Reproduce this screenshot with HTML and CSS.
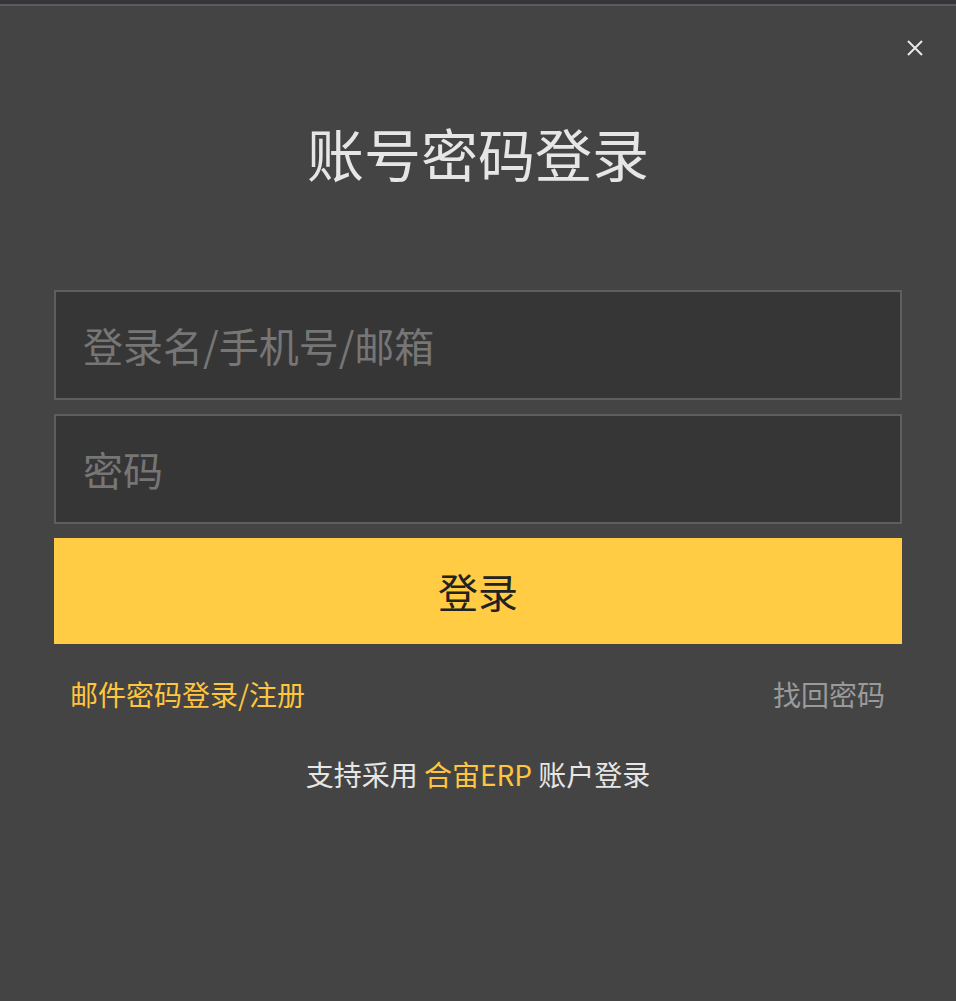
FILE: index.html
```html
<!DOCTYPE html>
<html lang="zh-CN">
<head>
<meta charset="utf-8">
<link rel="stylesheet" href="styles.css">
</head>
<body>
<div class="topbar"></div>
<div class="dialog">
  <div class="close-row">
    <button class="close" aria-label="关闭">
      <svg width="16" height="16" viewBox="0 0 16 16"><path d="M1 1 L15 15 M15 1 L1 15" stroke="#e8e8e8" stroke-width="2" fill="none"/></svg>
    </button>
  </div>
  <h1 class="title">账号密码登录</h1>
  <form class="form">
    <input class="field" type="text" placeholder="登录名/手机号/邮箱">
    <input class="field" type="password" placeholder="密码">
    <button class="submit" type="button">登录</button>
  </form>
  <div class="links">
    <a class="link-yellow" href="#">邮件密码登录/注册</a>
    <a class="link-gray" href="#">找回密码</a>
  </div>
  <p class="support">支持采用 <span class="hl">合宙ERP</span> 账户登录</p>
</div>
</body>
</html>
```
FILE: styles.css
```css
html, body {
  margin: 0;
  padding: 0;
  background: #444444;
  height: 100%;
}
body {
  font-family: "Noto Sans CJK SC", "Noto Sans", sans-serif;
  color: #e6e6e6;
}
.topbar {
  height: 4px;
  background: #35363a;
  border-bottom: 2px solid #5c5c5c;
}
.dialog {
  padding: 0 54px;
}
.close-row {
  display: flex;
  justify-content: flex-end;
  padding-top: 34px;
  margin-right: -21px;
}
.close {
  background: none;
  border: 0;
  padding: 0;
  width: 16px;
  height: 16px;
  display: block;
  cursor: pointer;
}
.close svg { display: block; }
.title {
  margin: 56px 0 0;
  font-size: 57px;
  font-weight: 400;
  line-height: 80px;
  text-align: center;
  color: #e6e6e6;
}
.form {
  margin-top: 98px;
  display: flex;
  flex-direction: column;
  gap: 14px;
}
.field {
  box-sizing: border-box;
  height: 110px;
  width: 100%;
  background: #363636;
  border: 2px solid #5e5e5e;
  padding: 0 27px;
  font-family: inherit;
  font-size: 40px;
  color: #e6e6e6;
  outline: none;
}
.field::placeholder {
  color: #767676;
}
.submit {
  height: 106px;
  border: 0;
  background: #ffcc44;
  color: #222222;
  font-family: inherit;
  font-size: 40px;
  cursor: pointer;
}
.links {
  display: flex;
  justify-content: space-between;
  padding: 0 17px 0 16px;
  margin-top: 30px;
  font-size: 28px;
  line-height: 40px;
}
.links a { text-decoration: none; }
.link-yellow { color: #ffc53d; }
.link-gray { color: #9a9a9a; }
.support {
  margin: 40px 0 0;
  text-align: center;
  font-size: 28px;
  line-height: 40px;
  color: #e6e6e6;
}
.hl { color: #ffc53d; }
```
